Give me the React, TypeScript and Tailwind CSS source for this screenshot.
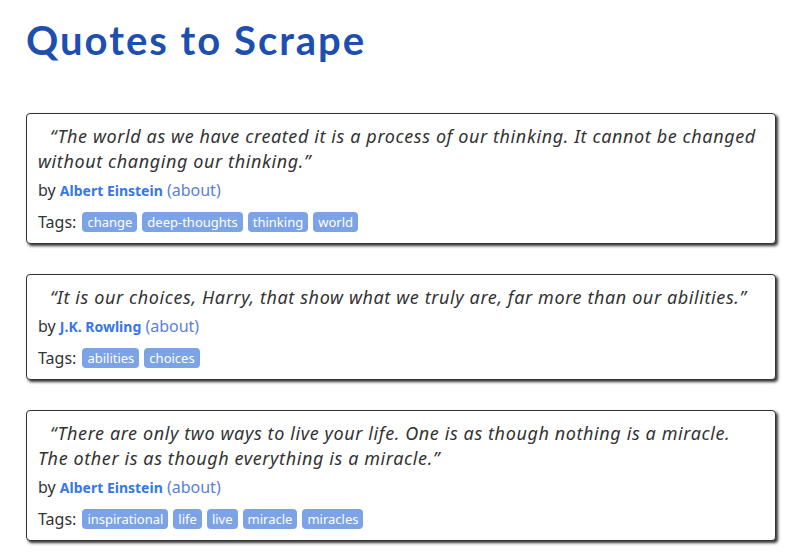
const quotes = [
  {
    text: "“The world as we have created it is a process of our thinking. It cannot be changed without changing our thinking.”",
    author: "Albert Einstein",
    tags: ["change", "deep-thoughts", "thinking", "world"],
  },
  {
    text: "“It is our choices, Harry, that show what we truly are, far more than our abilities.”",
    author: "J.K. Rowling",
    tags: ["abilities", "choices"],
  },
  {
    text: "“There are only two ways to live your life. One is as though nothing is a miracle. The other is as though everything is a miracle.”",
    author: "Albert Einstein",
    tags: ["inspirational", "life", "live", "miracle", "miracles"],
  },
];

function QuoteCard({ text, author, tags }: { text: string; author: string; tags: string[] }) {
  return (
    <div className="border border-[#333] rounded-[4px] shadow-[2px_2px_3px_#333] px-[11px] pt-[10px] pb-[10px] bg-white">
      <p className="italic text-[18px] leading-[25px] tracking-[0.6px] text-[#333] indent-[12px]">{text}</p>
      <p className="mt-[5px] h-[22px] text-[16px] leading-[22px] text-[#333]">
        by <span className="font-bold text-[14px] leading-none text-[#3677e8]">{author}</span>{" "}
        <span className="text-[#5a80d8]">(about)</span>
      </p>
      <div className="mt-[10px] flex items-center gap-[5px] text-[16px] leading-[22px] text-[#333]">
        <span className="mr-[1px]">Tags:</span>
        {tags.map((t) => (
          <span key={t} className="bg-[#7ca3e6] text-white text-[13px] leading-[20px] px-[5px] rounded-[4px]">
            {t}
          </span>
        ))}
      </div>
    </div>
  );
}

export default function App() {
  return (
    <div className="min-h-screen bg-white px-[26px] pr-[33px] pt-[16px] font-['Noto_Sans',sans-serif]">
      <h1 className="font-['Lato',sans-serif] font-bold text-[40px] leading-[48px] tracking-[2px] text-[#1c4fb0]">Quotes to Scrape</h1>
      <div className="mt-[49px] flex flex-col gap-[30px]">
        {quotes.map((q, i) => (
          <QuoteCard key={i} {...q} />
        ))}
      </div>
    </div>
  );
}
